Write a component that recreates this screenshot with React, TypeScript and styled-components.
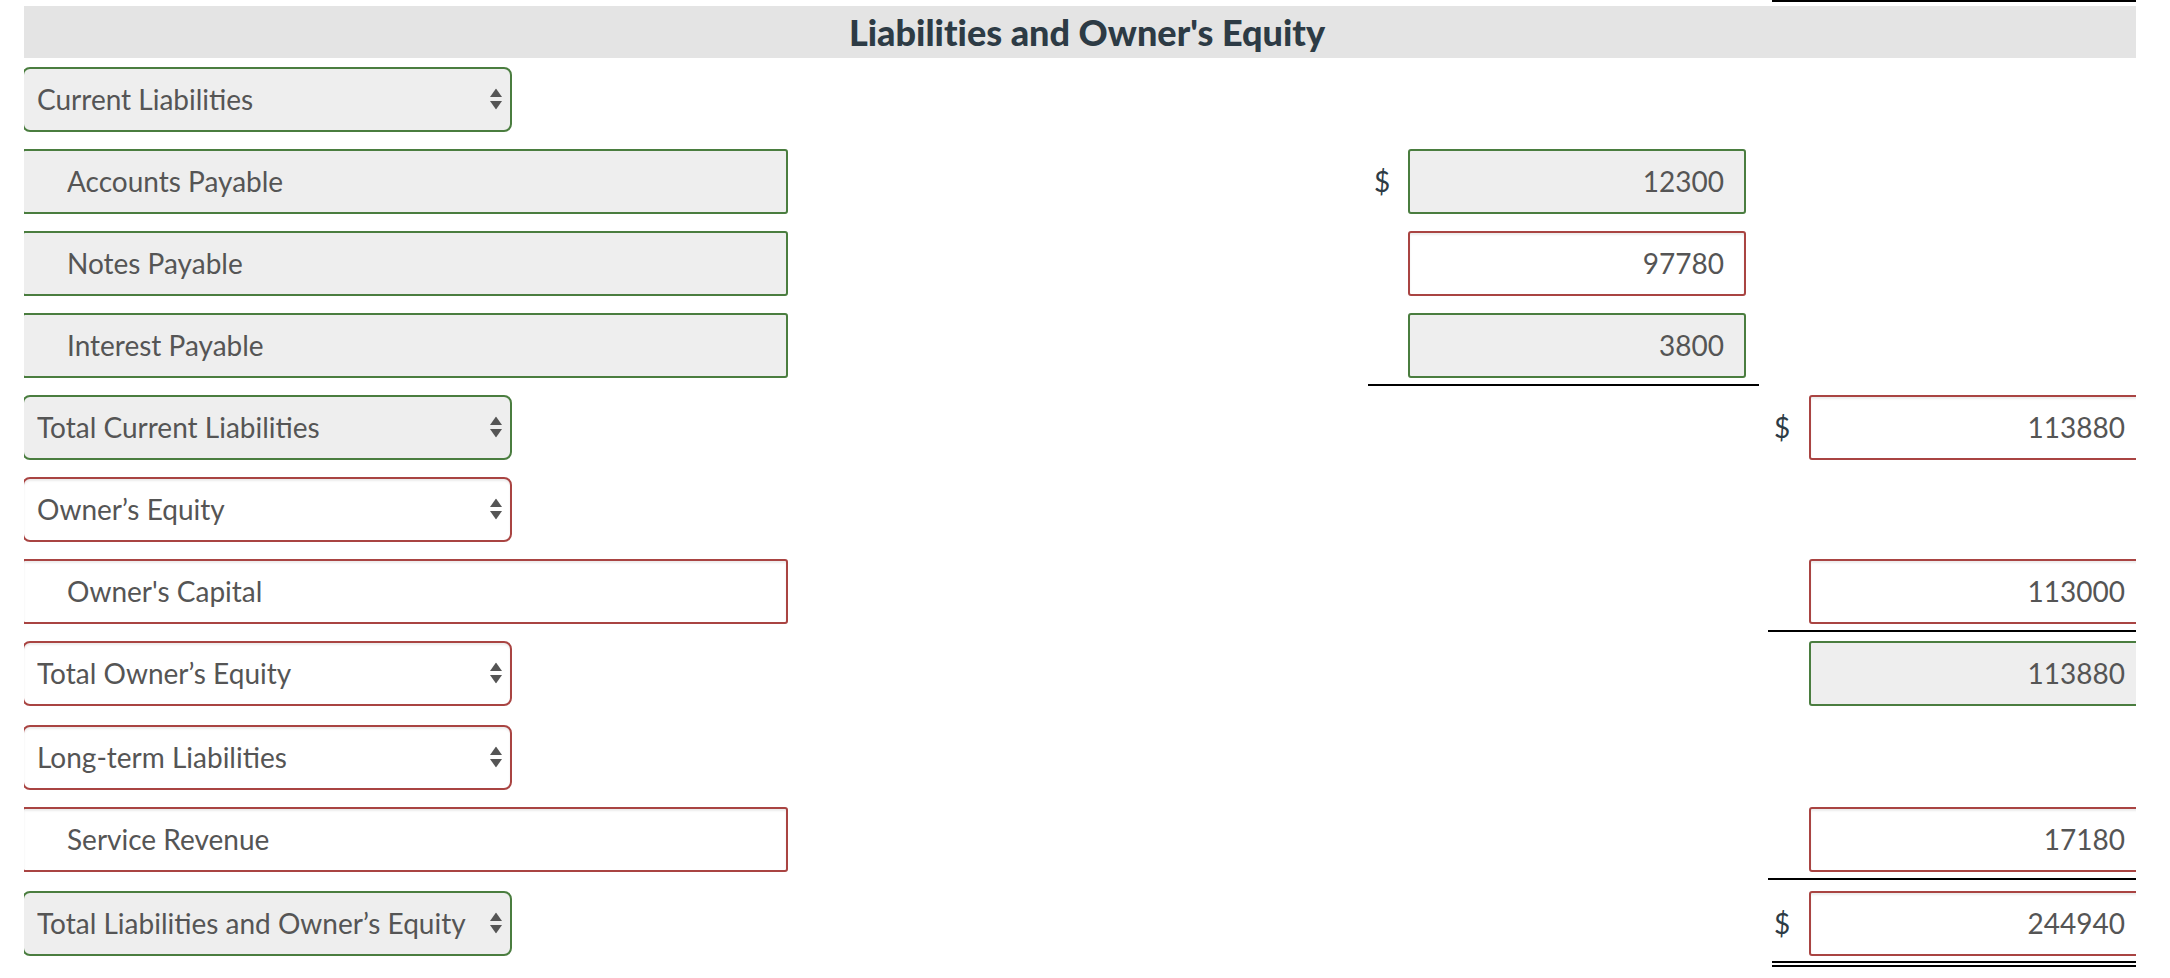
import React from 'react';
import styled, { createGlobalStyle, css } from 'styled-components';

type Tone = 'ok' | 'bad';
type Rule = 'none' | 'single' | 'double';

interface AmountProps {
  value: string;
  tone: Tone;
  dollar?: boolean;
}

interface SheetRow {
  label: string;
  kind: 'select' | 'input';
  labelTone: Tone;
  mid?: AmountProps;
  midRule?: Rule;
  right?: AmountProps;
  rightRule?: Rule;
  lift?: number;
  last?: boolean;
}

const rows: SheetRow[] = [
  { label: 'Current Liabilities', kind: 'select', labelTone: 'ok' },
  { label: 'Accounts Payable', kind: 'input', labelTone: 'ok', mid: { value: '12300', tone: 'ok', dollar: true } },
  { label: 'Notes Payable', kind: 'input', labelTone: 'ok', mid: { value: '97780', tone: 'bad' } },
  { label: 'Interest Payable', kind: 'input', labelTone: 'ok', mid: { value: '3800', tone: 'ok' }, midRule: 'single' },
  { label: 'Total Current Liabilities', kind: 'select', labelTone: 'ok', right: { value: '113880', tone: 'bad', dollar: true } },
  { label: 'Owner’s Equity', kind: 'select', labelTone: 'bad' },
  { label: "Owner's Capital", kind: 'input', labelTone: 'bad', right: { value: '113000', tone: 'bad' }, rightRule: 'single' },
  { label: 'Total Owner’s Equity', kind: 'select', labelTone: 'bad', right: { value: '113880', tone: 'ok' } },
  { label: 'Long-term Liabilities', kind: 'select', labelTone: 'bad', lift: 2 },
  { label: 'Service Revenue', kind: 'input', labelTone: 'bad', right: { value: '17180', tone: 'bad' }, rightRule: 'single' },
  {
    label: 'Total Liabilities and Owner’s Equity',
    kind: 'select',
    labelTone: 'ok',
    right: { value: '244940', tone: 'bad', dollar: true },
    rightRule: 'double',
    lift: 2,
    last: true,
  },
];

const GlobalStyle = createGlobalStyle`
  html, body {
    margin: 0;
    padding: 0;
    background: #ffffff;
  }
  body {
    font-family: Lato, "Open Sans", "Liberation Sans", Arial, sans-serif;
    font-variant-ligatures: none;
  }
`;

const toneStyles = {
  ok: css`
    border-color: #4a7d3f;
    background: #eeeeee;
  `,
  bad: css`
    border-color: #a94442;
    background: #ffffff;
    box-shadow: inset 0 2px 2px rgba(0, 0, 0, 0.075);
  `,
};

const Sheet = styled.div`
  margin-left: 24px;
  width: 2112px;
  overflow: hidden;
`;

const TopRule = styled.div`
  height: 2px;
  width: 364px;
  margin-left: 1748px;
  background: #000000;
`;

const Header = styled.div`
  margin-top: 4px;
  height: 52px;
  background: #e4e4e4;
  display: flex;
  align-items: center;
  justify-content: center;
`;

const Title = styled.h2`
  margin: 0;
  padding-left: 14px;
  font-size: 36px;
  font-weight: 900;
  color: #2d3b45;
  font-variant-ligatures: none;
`;

const Row = styled.div<{ $lift?: number; $last?: boolean }>`
  display: grid;
  grid-template-columns: 1335px 391px 379px;
  column-gap: 9px;
  height: ${(p) => (p.$last ? 'auto' : '82px')};
  margin-top: ${(p) => p.$lift ?? 0}px;
`;

const LabelCell = styled.div`
  display: flex;
  align-items: flex-start;
  padding-top: 8.5px;
`;

const AmountCell = styled.div<{ $rule: Rule }>`
  position: relative;
  box-sizing: border-box;
  display: flex;
  align-items: flex-start;
  padding-top: 8.5px;
  padding-bottom: ${(p) => (p.$rule === 'double' ? '11px' : '0')};
  border-bottom: ${(p) => (p.$rule === 'single' ? '2px solid #000' : '0')};

  ${(p) =>
    p.$rule === 'double' &&
    css`
      &::after {
        content: '';
        position: absolute;
        left: 4px;
        right: 0;
        bottom: 0;
        border-bottom: 6px double #000;
      }
    `}
`;

const Dollar = styled.span<{ $slot: number }>`
  box-sizing: border-box;
  flex: 0 0 ${(p) => p.$slot}px;
  height: 65px;
  padding-left: 6px;
  display: flex;
  align-items: center;
  font-size: 28px;
  color: #2d3b45;
`;

const AmountInput = styled.input<{ $tone: Tone }>`
  box-sizing: border-box;
  width: 338px;
  height: 65px;
  margin: 0;
  padding: 0 20px 0 10px;
  border: 2px solid;
  border-radius: 3px;
  outline: none;
  font-family: inherit;
  font-size: 28px;
  color: #555555;
  text-align: right;
  ${(p) => toneStyles[p.$tone]}
`;

const LabelInput = styled.input<{ $tone: Tone }>`
  box-sizing: border-box;
  width: 766px;
  height: 65px;
  margin: 0 0 0 -2px;
  padding: 0 12px 0 43px;
  border: 2px solid;
  border-radius: 3px;
  outline: none;
  font-family: inherit;
  font-size: 28px;
  color: #555555;
  ${(p) => toneStyles[p.$tone]}
`;

const SelectBox = styled.div`
  position: relative;
  width: 490px;
  height: 65px;
  margin-left: -2px;
`;

const Select = styled.select<{ $tone: Tone }>`
  appearance: none;
  box-sizing: border-box;
  width: 100%;
  height: 100%;
  margin: 0;
  padding: 0 36px 0 13px;
  border: 2px solid;
  border-radius: 8px;
  outline: none;
  font-family: inherit;
  font-size: 28px;
  color: #555555;
  ${(p) => toneStyles[p.$tone]}
`;

const Arrows = styled.svg`
  position: absolute;
  right: 10px;
  top: 50%;
  transform: translateY(-50%);
  pointer-events: none;
`;

const SortArrows = () => (
  <Arrows width="12" height="21" viewBox="0 0 12 21" aria-hidden="true">
    <path d="M6 0 L12 8.5 L0 8.5 Z" fill="#555555" />
    <path d="M0 12.5 L12 12.5 L6 21 Z" fill="#555555" />
  </Arrows>
);

const Amount = ({ value, tone, dollar, slot }: AmountProps & { slot: number }) => (
  <>
    <Dollar $slot={slot}>{dollar ? '$' : ''}</Dollar>
    <AmountInput $tone={tone} value={value} readOnly />
  </>
);

export default function App() {
  return (
    <>
      <GlobalStyle />
      <Sheet>
        <TopRule />
        <Header>
          <Title>Liabilities and Owner's Equity</Title>
        </Header>
        {rows.map((row) => (
          <Row key={row.label} $lift={row.lift} $last={row.last}>
            <LabelCell>
              {row.kind === 'select' ? (
                <SelectBox>
                  <Select $tone={row.labelTone} value={row.label} onChange={() => {}}>
                    <option value={row.label}>{row.label}</option>
                  </Select>
                  <SortArrows />
                </SelectBox>
              ) : (
                <LabelInput $tone={row.labelTone} value={row.label} readOnly />
              )}
            </LabelCell>
            <AmountCell $rule={row.midRule ?? 'none'}>
              {row.mid && <Amount {...row.mid} slot={40} />}
            </AmountCell>
            <AmountCell $rule={row.rightRule ?? 'none'}>
              {row.right && <Amount {...row.right} slot={41} />}
            </AmountCell>
          </Row>
        ))}
      </Sheet>
    </>
  );
}
